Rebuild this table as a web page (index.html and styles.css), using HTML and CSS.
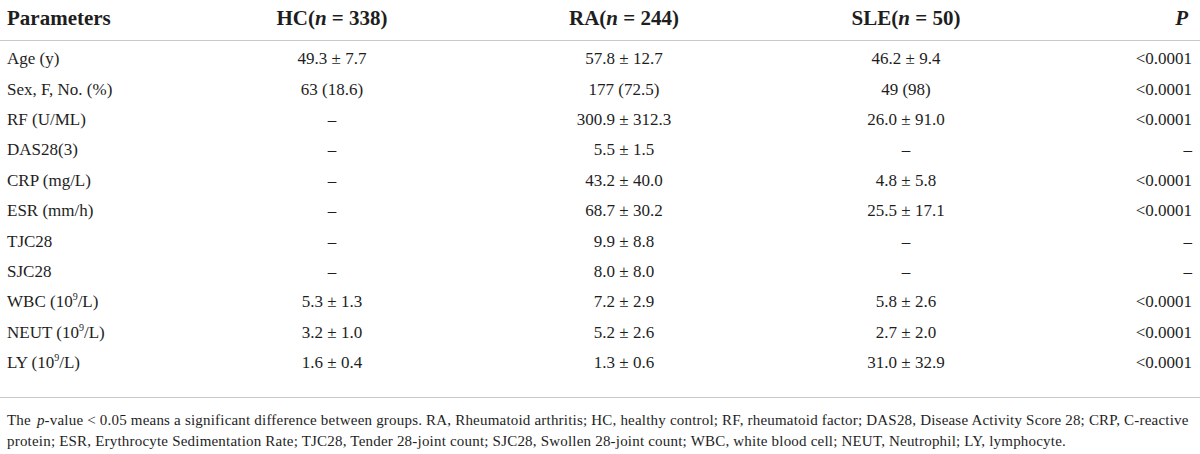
FILE: index.html
```html
<!DOCTYPE html>
<html lang="en">
<head>
    <meta charset="UTF-8">
    <title>Table 1</title>
    <link rel="stylesheet" href="styles.css">
</head>
<body>
<div class="wrap">
    <table class="data">
        <colgroup>
            <col class="c-param">
            <col class="c-hc">
            <col class="c-ra">
            <col class="c-sle">
            <col class="c-p">
        </colgroup>
        <thead>
        <tr>
            <th class="name">Parameters</th>
            <th>HC(<i>n</i> = 338)</th>
            <th>RA(<i>n</i> = 244)</th>
            <th>SLE(<i>n</i> = 50)</th>
            <th class="pval"><i>P</i></th>
        </tr>
        </thead>
        <tbody>
        <tr><td class="name">Age (y)</td><td>49.3 ± 7.7</td><td>57.8 ± 12.7</td><td>46.2 ± 9.4</td><td class="pval">&lt;0.0001</td></tr>
        <tr><td class="name">Sex, F, No. (%)</td><td>63 (18.6)</td><td>177 (72.5)</td><td>49 (98)</td><td class="pval">&lt;0.0001</td></tr>
        <tr><td class="name">RF (U/ML)</td><td>–</td><td>300.9 ± 312.3</td><td>26.0 ± 91.0</td><td class="pval">&lt;0.0001</td></tr>
        <tr><td class="name">DAS28(3)</td><td>–</td><td>5.5 ± 1.5</td><td>–</td><td class="pval">–</td></tr>
        <tr><td class="name">CRP (mg/L)</td><td>–</td><td>43.2 ± 40.0</td><td>4.8 ± 5.8</td><td class="pval">&lt;0.0001</td></tr>
        <tr><td class="name">ESR (mm/h)</td><td>–</td><td>68.7 ± 30.2</td><td>25.5 ± 17.1</td><td class="pval">&lt;0.0001</td></tr>
        <tr><td class="name">TJC28</td><td>–</td><td>9.9 ± 8.8</td><td>–</td><td class="pval">–</td></tr>
        <tr><td class="name">SJC28</td><td>–</td><td>8.0 ± 8.0</td><td>–</td><td class="pval">–</td></tr>
        <tr><td class="name">WBC (10<sup>9</sup>/L)</td><td>5.3 ± 1.3</td><td>7.2 ± 2.9</td><td>5.8 ± 2.6</td><td class="pval">&lt;0.0001</td></tr>
        <tr><td class="name">NEUT (10<sup>9</sup>/L)</td><td>3.2 ± 1.0</td><td>5.2 ± 2.6</td><td>2.7 ± 2.0</td><td class="pval">&lt;0.0001</td></tr>
        <tr><td class="name">LY (10<sup>9</sup>/L)</td><td>1.6 ± 0.4</td><td>1.3 ± 0.6</td><td>31.0 ± 32.9</td><td class="pval">&lt;0.0001</td></tr>
        </tbody>
    </table>
    <p class="note">The <i>p</i>-value &lt; 0.05 means a significant difference between groups. RA, Rheumatoid arthritis; HC, healthy control; RF, rheumatoid factor; DAS28, Disease Activity Score 28; CRP, C-reactive protein; ESR, Erythrocyte Sedimentation Rate; TJC28, Tender 28-joint count; SJC28, Swollen 28-joint count; WBC, white blood cell; NEUT, Neutrophil; LY, lymphocyte.</p>
</div>
</body>
</html>
```

FILE: styles.css
```css
body {
    margin: 0;
    padding: 0;
    background: #ffffff;
    color: #1e1e1e;
    font-family: "Liberation Serif", "Times New Roman", serif;
}
.wrap {
    width: 1200px;
}
.data {
    width: 1200px;
    border-collapse: collapse;
    table-layout: fixed;
    border-bottom: 1px solid #c9c9c9;
}
.c-param { width: 216px; }
.c-hc { width: 232px; }
.c-ra { width: 352px; }
.c-sle { width: 212px; }
.c-p { width: 188px; }

.data th {
    height: 37px;
    padding: 0 0 3px 0;
    font-size: 21px;
    font-weight: bold;
    text-align: center;
    vertical-align: middle;
    border-bottom: 1px solid #c9c9c9;
}
.data td {
    height: 30.4px;
    padding: 0;
    font-size: 17px;
    text-align: center;
    vertical-align: middle;
}
.data tbody tr:first-child td {
    padding-top: 3px;
}
.data tbody tr:last-child td {
    height: 30px;
    padding-bottom: 19px;
}
.data .name {
    text-align: left;
    padding-left: 7px;
}
.data .pval {
    text-align: right;
    padding-right: 8px;
}
.data th.pval {
    padding-right: 12px;
}
sup {
    font-size: 10px;
    line-height: 0;
}
.note {
    margin: 0;
    padding: 12px 7px 0 7px;
    font-size: 15px;
    letter-spacing: 0.2px;
    line-height: 21.5px;
}
.note i {
    padding-left: 2px;
}
```
